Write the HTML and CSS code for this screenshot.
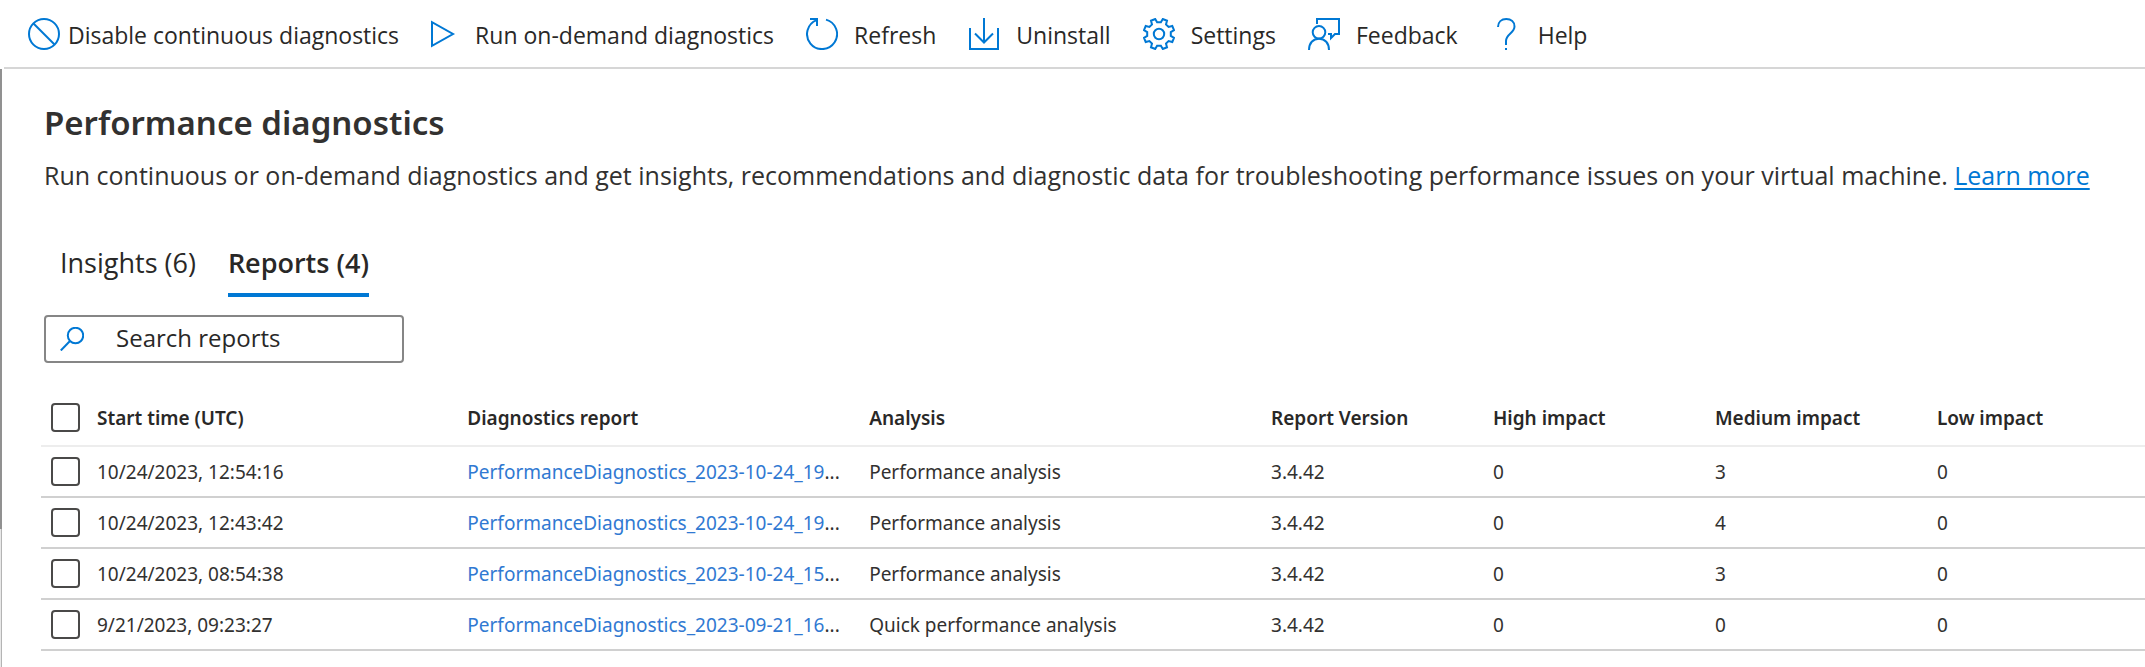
FILE: index.html
```html
<!DOCTYPE html>
<html lang="en">
<head>
<meta charset="utf-8">
<meta name="viewport" content="width=device-width, initial-scale=1">
<title>Performance diagnostics</title>
<link rel="stylesheet" href="styles.css">
</head>
<body>
<header class="toolbar" role="toolbar" aria-label="Diagnostics actions">
  <button class="command command-tight" type="button">
    <svg class="icon" viewBox="0 0 32 32" aria-hidden="true"><circle cx="16" cy="16" r="15"/><path d="M5.5 5.5l21 21"/></svg>
    <span class="command-label">Disable continuous diagnostics</span>
  </button>
  <button class="command" type="button">
    <svg class="icon" viewBox="0 0 32 32" aria-hidden="true"><path d="M5 4.2v23.6L26 16z"/></svg>
    <span class="command-label">Run on-demand diagnostics</span>
  </button>
  <button class="command" type="button">
    <svg class="icon" viewBox="0 0 32 32" aria-hidden="true"><path d="M20 1.6A15 15 0 1 1 10.6 2.1M4 1h7v7"/></svg>
    <span class="command-label">Refresh</span>
  </button>
  <button class="command" type="button">
    <svg class="icon" viewBox="0 0 32 32" aria-hidden="true"><path d="M2 10v21h28V10M16 0v24.500M7 15.500l9 9 9-9"/></svg>
    <span class="command-label">Uninstall</span>
  </button>
  <button class="command" type="button">
    <svg class="icon" viewBox="-16 -16 32 32" aria-hidden="true"><circle r="5.2"/><path d="M1.900-11.800L3.800-15 8-13.300 7-9.600 9.600-7 13.300-8 15-3.800 11.800-1.900V1.900L15 3.800 13.300 8 9.600 7 7 9.600 8 13.300 3.800 15 1.900 11.800H-1.900L-3.800 15-8 13.300-7 9.600-9.600 7-13.300 8-15 3.800-11.800 1.900V-1.900L-15-3.800-13.300-8-9.600-7-7-9.600-8-13.300-3.800-15-1.900-11.800z"/></svg>
    <span class="command-label">Settings</span>
  </button>
  <button class="command" type="button">
    <svg class="icon" viewBox="0 0 32 32" aria-hidden="true"><circle cx="11" cy="14.300" r="6.300"/><path d="M1 32C1 25 5 20.700 11 20.700S21 25 21 32M9 6V1h22v15h-4l-4 4v-4h-3"/></svg>
    <span class="command-label">Feedback</span>
  </button>
  <button class="command" type="button">
    <svg class="icon" viewBox="0 0 32 32" aria-hidden="true"><path d="M8 9c0-5 3.500-8 8.300-8S24.500 4 24.500 8.500C24.500 15 16 16 16 23v4M16 30v2"/></svg>
    <span class="command-label">Help</span>
  </button>
</header>

<div class="body">
  <div class="gutter" aria-hidden="true"><div class="gutter-thumb"></div><div class="gutter-track"></div></div>
  <main class="content">
    <section class="intro">
      <h1 class="title">Performance diagnostics</h1>
      <p class="summary">Run continuous or on-demand diagnostics and get insights, recommendations and diagnostic data for troubleshooting performance issues on your virtual machine. <a class="learn-more" href="#learn-more">Learn more</a></p>
      <div class="tabs" role="tablist">
        <button class="tab" type="button" role="tab" aria-selected="false">Insights (6)</button>
        <button class="tab tab-active" type="button" role="tab" aria-selected="true">Reports (4)</button>
      </div>
      <label class="search">
        <svg class="search-icon" viewBox="0 0 24 24" aria-hidden="true"><circle cx="15.500" cy="8.500" r="7.700"/><path d="M10 14L.8 23.500"/></svg>
        <input class="search-input" type="text" placeholder="Search reports" aria-label="Search reports">
      </label>
    </section>

    <table class="reports">
      <colgroup>
        <col class="col-check"><col class="col-time"><col class="col-report"><col class="col-analysis"><col class="col-value"><col class="col-value"><col class="col-value"><col>
      </colgroup>
      <thead>
        <tr>
          <th class="check-cell"><input class="check" type="checkbox" aria-label="Select all reports"></th>
          <th scope="col">Start time (UTC)</th>
          <th scope="col">Diagnostics report</th>
          <th scope="col">Analysis</th>
          <th scope="col">Report Version</th>
          <th scope="col">High impact</th>
          <th scope="col">Medium impact</th>
          <th scope="col">Low impact</th>
        </tr>
      </thead>
      <tbody>
        <tr>
          <td class="check-cell"><input class="check" type="checkbox" aria-label="Select report 10/24/2023, 12:54:16"></td>
          <td>10/24/2023, 12:54:16</td>
          <td><a class="report-link" href="#report-1">PerformanceDiagnostics_2023-10-24_19</a>...</td>
          <td>Performance analysis</td>
          <td>3.4.42</td><td>0</td><td>3</td><td>0</td>
        </tr>
        <tr>
          <td class="check-cell"><input class="check" type="checkbox" aria-label="Select report 10/24/2023, 12:43:42"></td>
          <td>10/24/2023, 12:43:42</td>
          <td><a class="report-link" href="#report-2">PerformanceDiagnostics_2023-10-24_19</a>...</td>
          <td>Performance analysis</td>
          <td>3.4.42</td><td>0</td><td>4</td><td>0</td>
        </tr>
        <tr>
          <td class="check-cell"><input class="check" type="checkbox" aria-label="Select report 10/24/2023, 08:54:38"></td>
          <td>10/24/2023, 08:54:38</td>
          <td><a class="report-link" href="#report-3">PerformanceDiagnostics_2023-10-24_15</a>...</td>
          <td>Performance analysis</td>
          <td>3.4.42</td><td>0</td><td>3</td><td>0</td>
        </tr>
        <tr>
          <td class="check-cell"><input class="check" type="checkbox" aria-label="Select report 9/21/2023, 09:23:27"></td>
          <td>9/21/2023, 09:23:27</td>
          <td><a class="report-link" href="#report-4">PerformanceDiagnostics_2023-09-21_16</a>...</td>
          <td>Quick performance analysis</td>
          <td>3.4.42</td><td>0</td><td>0</td><td>0</td>
        </tr>
      </tbody>
    </table>
  </main>
</div>
</body>
</html>
```
FILE: styles.css
```css
:root {
  --text: #323130;
  --text-strong: #292827;
  --accent: #0078d4;
  --link: #3079d2;
  --font: "Segoe UI", "Open Sans", "Noto Sans", sans-serif;
  --font-narrow: "Segoe UI", "Noto Sans", "Open Sans", sans-serif;
}

* {
  box-sizing: border-box;
}

body {
  margin: 0;
  min-height: 100vh;
  display: flex;
  flex-direction: column;
  background: #fff;
  color: var(--text);
  font-family: var(--font);
}

button,
input {
  font: inherit;
  color: inherit;
}

/* Command bar */
.toolbar {
  display: flex;
  align-items: center;
  gap: 32px;
  margin-left: 4px;
  padding: 16px 24px 15px;
  border-bottom: 2px solid #d6d6d6;
}

.command {
  display: flex;
  align-items: center;
  gap: 16px;
  padding: 0;
  border: 0;
  background: none;
  color: var(--text-strong);
  font-size: 23px;
  line-height: 34px;
  white-space: nowrap;
}

.command-label {
  padding-top: 2px;
}

.command-tight {
  gap: 8px;
  margin-right: -4px;
}

.icon {
  flex: none;
  width: 32px;
  height: 32px;
  fill: none;
  stroke: var(--accent);
  stroke-width: 2;
}

/* Page body */
.body {
  flex: 1;
  display: flex;
}

.gutter {
  flex: none;
  width: 2px;
  display: flex;
  flex-direction: column;
}

.gutter-thumb {
  flex: 77;
  background: #919191;
}

.gutter-track {
  flex: 23;
  background: #e8e8e8;
  border-right: 1px solid #b4b4b4;
}

.content {
  flex: 1;
  min-width: 0;
}

.intro {
  padding: 31px 42px 0;
}

.title {
  margin: 0;
  font-family: var(--font-narrow);
  font-size: 33px;
  font-weight: 600;
  line-height: 46px;
}

.summary {
  margin: 11px 0 0;
  font-size: 25px;
  line-height: 36px;
}

.learn-more {
  color: var(--accent);
  text-decoration: underline;
  text-decoration-thickness: 2px;
  text-underline-offset: 3px;
}

/* Tabs */
.tabs {
  display: flex;
  gap: 32px;
  margin-top: 52px;
  padding-left: 16px;
}

.tab {
  padding: 0 0 12px;
  border: 0;
  border-bottom: 4px solid transparent;
  background: none;
  color: var(--text-strong);
  font-size: 27px;
  line-height: 36px;
}

.tab-active {
  border-bottom-color: var(--accent);
  font-weight: 600;
}

/* Search box */
.search {
  display: flex;
  align-items: center;
  gap: 32px;
  width: 360px;
  height: 48px;
  margin-top: 18px;
  padding: 0 14px;
  border: 2px solid #868686;
  border-radius: 4px;
}

.search-icon {
  flex: none;
  width: 24px;
  height: 24px;
  fill: none;
  stroke: var(--accent);
  stroke-width: 2;
}

.search-input {
  flex: 1;
  min-width: 0;
  padding: 0 0 2px;
  border: 0;
  outline: 0;
  background: none;
  font-size: 24px;
  line-height: 36px;
}

.search-input::placeholder {
  color: var(--text-strong);
  opacity: 1;
}

/* Reports table */
.reports {
  width: calc(100% - 39px);
  margin: 27px 0 0 39px;
  border-collapse: separate;
  border-spacing: 0;
  table-layout: fixed;
  font-family: var(--font-narrow);
  font-size: 19px;
  line-height: 28px;
}

.col-check {
  width: 56px;
}

.col-time {
  width: 17.6%;
}

.col-report,
.col-analysis {
  width: 19.1%;
}

.col-value {
  width: 10.55%;
}

.reports th,
.reports td {
  height: 51px;
  padding: 0;
  border-bottom: 2px solid #d0d0d0;
  text-align: left;
  vertical-align: middle;
  white-space: nowrap;
}

.reports th {
  height: 57px;
  border-bottom-color: #ededed;
  color: var(--text-strong);
  font-weight: 600;
}

.reports .check-cell {
  padding-left: 10px;
}

.check {
  display: block;
  appearance: none;
  width: 29px;
  height: 29px;
  margin: 0;
  border: 2px solid #4a4948;
  border-radius: 4px;
  background: #fff;
}

.check:checked {
  background: var(--accent);
}

.report-link {
  color: var(--link);
  text-decoration: none;
}
```
